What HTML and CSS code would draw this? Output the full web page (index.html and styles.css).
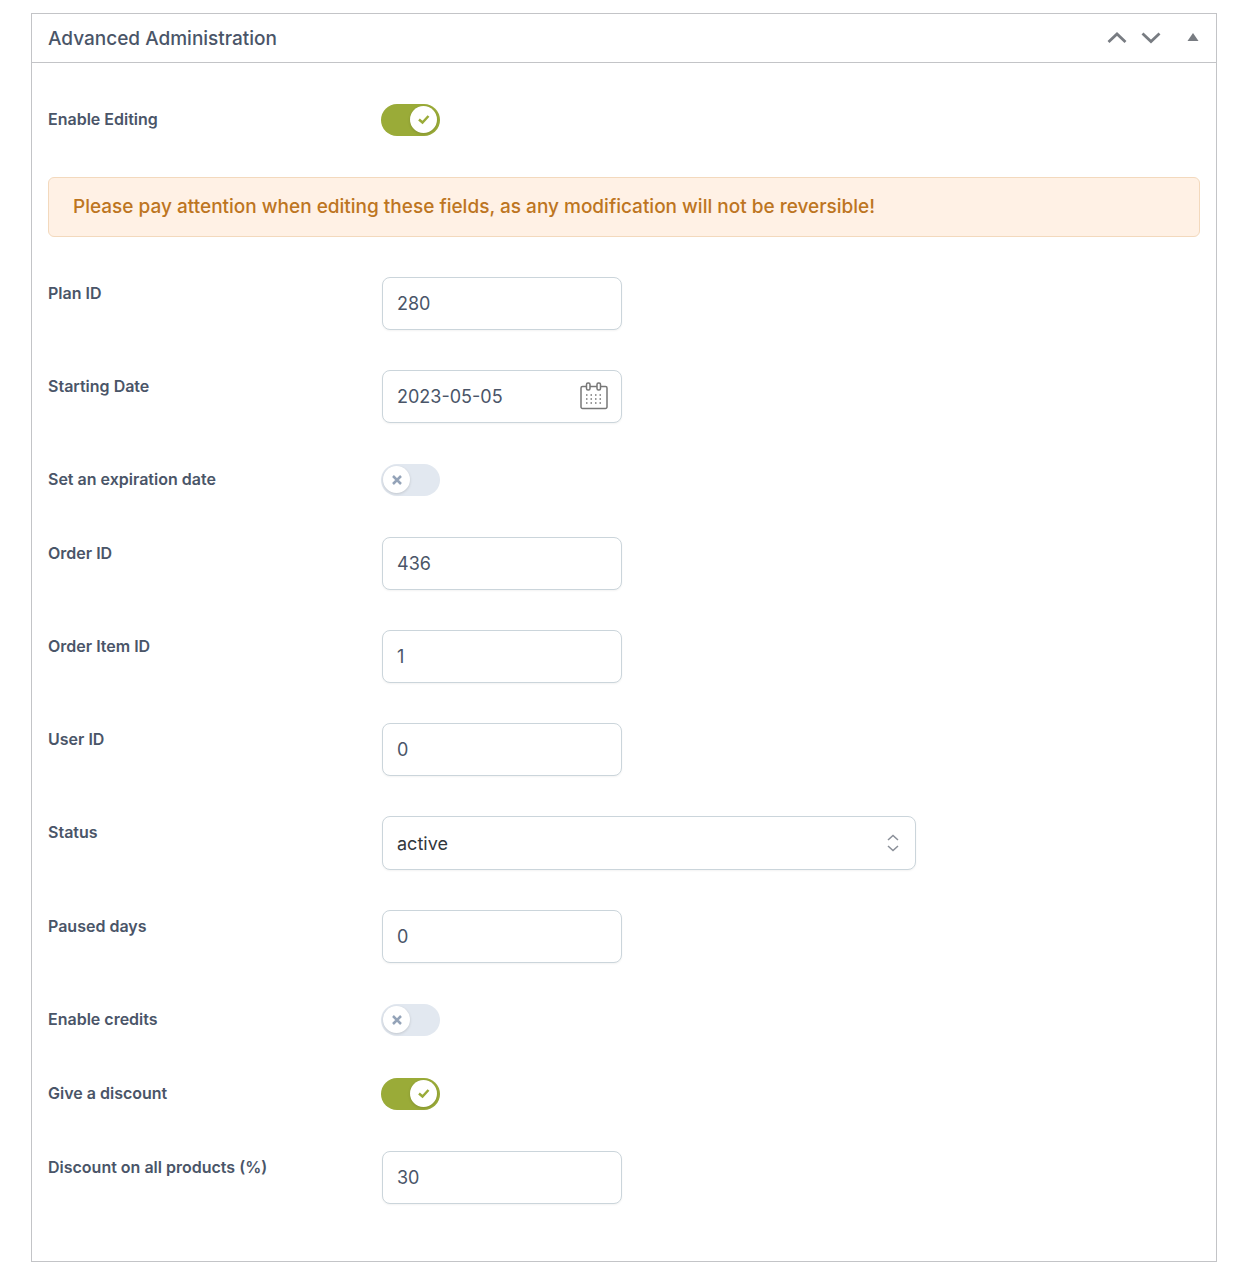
FILE: index.html
```html
<!DOCTYPE html>
<html lang="en">
<head>
  <meta charset="UTF-8">
  <meta name="viewport" content="width=device-width, initial-scale=1.0">
  <title>Advanced Administration</title>
  <link rel="stylesheet" href="styles.css">
</head>

<body>
  <section class="panel">
    <header class="panel-header">
      <h2>Advanced Administration</h2>
      <div class="panel-actions">
        <button type="button" aria-label="Move up">
          <svg width="20" height="20" viewBox="0 0 20 20"><path d="M1.500 14L10 6L18.500 14" fill="none" stroke="currentColor" stroke-width="2.800"/></svg>
        </button>
        <button type="button" aria-label="Move down">
          <svg width="20" height="20" viewBox="0 0 20 20"><path d="M1.500 5.500L10 13.500L18.500 5.500" fill="none" stroke="currentColor" stroke-width="2.800"/></svg>
        </button>
        <button type="button" class="collapse" aria-label="Toggle panel">
          <svg width="12" height="20" viewBox="0 0 12 20"><path d="M.5 13L6 5l5.500 8z" fill="currentColor"/></svg>
        </button>
      </div>
    </header>

    <form class="panel-body">
      <div class="row toggle-row">
        <label for="enable-editing">Enable Editing</label>
        <div class="toggle">
          <input type="checkbox" id="enable-editing" checked>
          <span class="knob">
            <svg class="check" width="14" height="14" viewBox="0 0 14 14"><path d="M2 6.500L5.500 9.500L11.500 3"/></svg>
            <svg class="cross" width="14" height="14" viewBox="0 0 14 14"><path d="M3 3L11 11M11 3L3 11"/></svg>
          </span>
        </div>
      </div>

      <div class="notice">Please pay attention when editing these fields, as any modification will not be reversible!</div>

      <div class="row">
        <label for="plan-id">Plan ID</label>
        <input type="text" class="field" id="plan-id" value="280">
      </div>

      <div class="row">
        <label for="start-date">Starting Date</label>
        <div class="date-field">
          <input type="text" class="field" id="start-date" value="2023-05-05">
          <svg class="calendar" width="28" height="28" viewBox="0 0 28 28">
            <g fill="none" stroke="#777" stroke-width="1.500">
              <path d="M6.500 4.500H2.500a1.500 1.500 0 0 0-1.500 1.500V25a1.500 1.500 0 0 0 1.500 1.500H25.500A1.500 1.500 0 0 0 27 25V6a1.500 1.500 0 0 0-1.500-1.500H21M10 4.500h7"/>
              <rect x="6.500" y="1" width="3.500" height="7" rx="1.500"/>
              <rect x="17" y="1" width="3.500" height="7" rx="1.500"/>
            </g>
            <path d="M6 13h17M6 17h17M6 21h17" stroke="#777" stroke-width="1.500" stroke-dasharray="1.500 3"/>
          </svg>
        </div>
      </div>

      <div class="row toggle-row">
        <label for="set-expiration">Set an expiration date</label>
        <div class="toggle">
          <input type="checkbox" id="set-expiration">
          <span class="knob">
            <svg class="check" width="14" height="14" viewBox="0 0 14 14"><path d="M2 6.500L5.500 9.500L11.500 3"/></svg>
            <svg class="cross" width="14" height="14" viewBox="0 0 14 14"><path d="M3 3L11 11M11 3L3 11"/></svg>
          </span>
        </div>
      </div>

      <div class="row">
        <label for="order-id">Order ID</label>
        <input type="text" class="field" id="order-id" value="436">
      </div>

      <div class="row">
        <label for="order-item-id">Order Item ID</label>
        <input type="text" class="field" id="order-item-id" value="1">
      </div>

      <div class="row">
        <label for="user-id">User ID</label>
        <input type="text" class="field" id="user-id" value="0">
      </div>

      <div class="row">
        <label for="status">Status</label>
        <div class="select-field">
          <select class="field" id="status">
            <option selected>active</option>
            <option>paused</option>
            <option>cancelled</option>
            <option>expired</option>
          </select>
          <svg class="arrows" width="12" height="18" viewBox="0 0 12 18"><path d="M1 6L6 1.500L11 6M1 12L6 16.500L11 12" fill="none" stroke="#8a8f98" stroke-width="1.500"/></svg>
        </div>
      </div>

      <div class="row">
        <label for="paused-days">Paused days</label>
        <input type="text" class="field" id="paused-days" value="0">
      </div>

      <div class="row toggle-row">
        <label for="enable-credits">Enable credits</label>
        <div class="toggle">
          <input type="checkbox" id="enable-credits">
          <span class="knob">
            <svg class="check" width="14" height="14" viewBox="0 0 14 14"><path d="M2 6.500L5.500 9.500L11.500 3"/></svg>
            <svg class="cross" width="14" height="14" viewBox="0 0 14 14"><path d="M3 3L11 11M11 3L3 11"/></svg>
          </span>
        </div>
      </div>

      <div class="row toggle-row">
        <label for="give-discount">Give a discount</label>
        <div class="toggle">
          <input type="checkbox" id="give-discount" checked>
          <span class="knob">
            <svg class="check" width="14" height="14" viewBox="0 0 14 14"><path d="M2 6.500L5.500 9.500L11.500 3"/></svg>
            <svg class="cross" width="14" height="14" viewBox="0 0 14 14"><path d="M3 3L11 11M11 3L3 11"/></svg>
          </span>
        </div>
      </div>

      <div class="row">
        <label for="discount">Discount on all products (%)</label>
        <input type="text" class="field" id="discount" value="30">
      </div>
    </form>
  </section>
</body>
</html>
```
FILE: styles.css
```css
* {
  box-sizing: border-box;
}
body {
  margin: 0;
  padding: 13px 25px 16px 31px;
  background: #fff;
  color: #4a5568;
  font-family: Inter, "Liberation Sans", sans-serif;
}
.panel {
  border: 1px solid #c3c4c7;
}
.panel-header {
  display: flex;
  align-items: center;
  justify-content: space-between;
  height: 49px;
  padding: 0 17px 0 16px;
  border-bottom: 1px solid #c3c4c7;
}
.panel-header h2 {
  margin: 0;
  font-size: 19px;
  font-weight: 500;
}
.panel-actions {
  display: flex;
  align-items: center;
  gap: 14px;
}
.panel-actions button {
  display: flex;
  padding: 0;
  border: 0;
  background: none;
  color: #787c82;
  cursor: pointer;
}
.panel-actions .collapse {
  margin-left: 12px;
}
.panel-body {
  display: flex;
  flex-direction: column;
  gap: 40px;
  padding: 40px 16px 57px;
}

/* rows */
.row {
  display: grid;
  grid-template-columns: 334px 1fr;
  align-items: start;
}
.row label {
  font-size: 16px;
  font-weight: 600;
  line-height: 32px;
}
.notice {
  padding: 14px 24px;
  border: 1px solid #f3d9bd;
  border-radius: 6px;
  background: #fff1e5;
  color: #bd7521;
  font-size: 19px;
  font-weight: 500;
  line-height: 30px;
}

/* text fields */
.field {
  display: block;
  width: 240px;
  height: 53px;
  padding: 0 14px;
  border: 1px solid #cbd5db;
  border-radius: 8px;
  background: #fff;
  box-shadow: 0 1px 2px rgba(0, 0, 0, 0.05);
  color: #4a5568;
  font-family: inherit;
  font-size: 18px;
}
.date-field {
  position: relative;
  width: 240px;
}
.calendar {
  position: absolute;
  top: 12px;
  right: 14px;
  pointer-events: none;
}
.select-field {
  position: relative;
  max-width: 534px;
}
.select-field .field {
  width: 100%;
  height: 54px;
  color: #32373c;
  appearance: none;
}
.arrows {
  position: absolute;
  top: 18px;
  right: 17px;
  pointer-events: none;
}

/* on/off switch */
.toggle-row {
  grid-template-columns: 333px 1fr;
}
.toggle {
  position: relative;
  width: 59px;
  padding: 1px 0;
}
.toggle input {
  display: block;
  width: 59px;
  height: 32px;
  margin: 0;
  border-radius: 16px;
  background: #e2e8f0;
  appearance: none;
  cursor: pointer;
}
.toggle input:checked {
  background: #9aab38;
}
.knob {
  position: absolute;
  top: 3px;
  left: 2px;
  display: flex;
  align-items: center;
  justify-content: center;
  width: 27px;
  height: 27px;
  border-radius: 50%;
  background: #fff;
  box-shadow: 0 1px 3px rgba(0, 0, 0, 0.15);
  pointer-events: none;
}
.knob path {
  fill: none;
  stroke: #94a3b8;
  stroke-width: 2.5;
}
.knob .check {
  display: none;
}
.toggle input:checked + .knob {
  left: 29px;
}
.toggle input:checked + .knob path {
  stroke: #9aab38;
}
.toggle input:checked + .knob .check {
  display: block;
}
.toggle input:checked + .knob .cross {
  display: none;
}
```
